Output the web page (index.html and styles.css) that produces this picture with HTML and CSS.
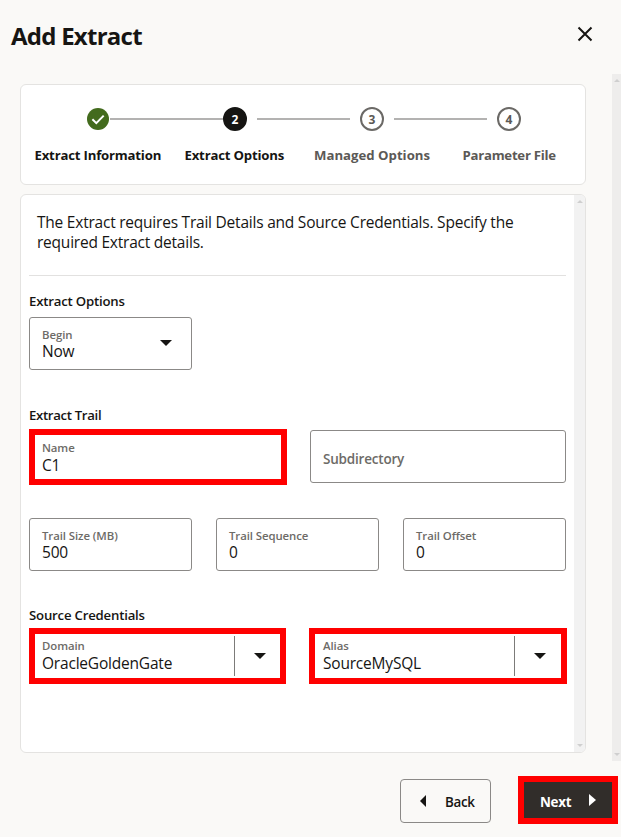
FILE: index.html
```html
<!DOCTYPE html>
<html lang="en">
<head>
<meta charset="utf-8">
<title>Add Extract</title>
<link rel="stylesheet" href="styles.css">
</head>
<body>
<header class="header">
  <h1 class="title">Add Extract</h1>
  <svg class="close" width="16" height="16" viewBox="0 0 16 16"><path d="M1.5 1.5 14.5 14.5M14.5 1.5 1.5 14.5"/></svg>
</header>
<main class="viewport">
  <div class="content">
    <section class="card stepper">
      <div class="track">
        <svg class="done" width="22" height="22" viewBox="0 0 22 22"><circle cx="11" cy="11" r="11"/><path d="M5.4 11.3 9.3 15.2 16.7 7.6"/></svg>
        <span class="line line-done"></span>
        <span class="dot current">2</span>
        <span class="line"></span>
        <span class="dot">3</span>
        <span class="line"></span>
        <span class="dot">4</span>
      </div>
      <div class="labels">
        <span class="step step-info">Extract Information</span>
        <span class="step step-options">Extract Options</span>
        <span class="step step-managed">Managed Options</span>
        <span class="step step-param">Parameter File</span>
      </div>
    </section>
    <section class="card panel">
      <div class="form">
        <p class="intro">The Extract requires Trail Details and Source Credentials. Specify the<br>required Extract details.</p>
        <h2 class="heading heading-options">Extract Options</h2>
        <div class="row row-begin">
          <div class="field select"><span class="label">Begin</span><span class="value">Now</span><span class="caret"></span></div>
        </div>
        <h2 class="heading heading-trail">Extract Trail</h2>
        <div class="row row-name">
          <div class="field marked name"><span class="label">Name</span><span class="value">C1</span></div>
          <div class="field empty"><span class="placeholder">Subdirectory</span></div>
        </div>
        <div class="row row-size">
          <div class="field"><span class="label">Trail Size (MB)</span><span class="value">500</span></div>
          <div class="field"><span class="label">Trail Sequence</span><span class="value">0</span></div>
          <div class="field"><span class="label">Trail Offset</span><span class="value">0</span></div>
        </div>
        <h2 class="heading heading-source">Source Credentials</h2>
        <div class="row row-source">
          <div class="field marked combo"><div class="text"><span class="label">Domain</span><span class="value">OracleGoldenGate</span></div><div class="drop"><span class="caret"></span></div></div>
          <div class="field marked combo alias"><div class="text"><span class="label">Alias</span><span class="value">SourceMySQL</span></div><div class="drop"><span class="caret"></span></div></div>
        </div>
      </div>
      <div class="scrollbar inner"><span class="arrow up"></span><span class="arrow down"></span></div>
    </section>
  </div>
  <div class="scrollbar outer"><span class="arrow up"></span><span class="arrow down"></span></div>
</main>
<footer class="footer">
  <button class="button back"><span class="prev"></span>Back</button>
  <button class="button next">Next<span class="fwd"></span></button>
</footer>
</body>
</html>
```
FILE: styles.css
```css
* { box-sizing: border-box; }
body {
  margin: 0;
  width: 621px;
  height: 837px;
  overflow: hidden;
  background: #faf9f7;
  color: #161513;
  font-family: "Open Sans", "Noto Sans", sans-serif;
  white-space: nowrap;
}
h1, h2, p { margin: 0; }
.header {
  display: flex;
  justify-content: space-between;
  height: 74px;
  padding: 19px 28px 0 11px;
}
.title { font-size: 24px; line-height: 33px; font-weight: 700; letter-spacing: -0.75px; }
.close { margin-top: 7px; fill: none; stroke: #161513; stroke-width: 2; }
.viewport { display: flex; justify-content: space-between; height: 687px; }
.content { width: 566px; margin-left: 20px; padding-top: 10px; }
.card { background: #fff; border: 1px solid #e4e3e1; border-radius: 6px; overflow: hidden; }
.stepper { height: 101px; margin-bottom: 9px; }
.track { display: flex; align-items: center; height: 24px; margin: 22px 0 0 66px; }
.done circle { fill: #436b1d; }
.done path { fill: none; stroke: #fff; stroke-width: 2; }
.dot {
  width: 24px;
  height: 24px;
  border: 2px solid #6b6966;
  border-radius: 50%;
  color: #5b5956;
  font-size: 12px;
  line-height: 21px;
  font-weight: 700;
  text-align: center;
}
.current { background: #161513; border-color: #161513; color: #fff; }
.line { width: 93px; height: 2px; margin: 0 10px; background: #b3b2b1; }
.line-done { width: 113px; margin: 0 0 0 1px; }
.labels { display: grid; grid-template-columns: 150px 129.5px 148.5px 1fr; padding-left: 13.5px; margin-top: 14px; }
.step { font-size: 13.2px; line-height: 20px; font-weight: 700; letter-spacing: -0.2px; }
.step-managed, .step-param { color: #5b5956; }
.step-managed { letter-spacing: 0; }
.step-param { letter-spacing: -0.26px; }
.panel { display: flex; justify-content: space-between; height: 559px; }
.form { width: 545px; padding: 16px 0 0 8px; }
.intro {
  height: 65px;
  padding: 1px 0 0 8px;
  border-bottom: 1px solid #e2e1e0;
  font-size: 15.5px;
  line-height: 20px;
  letter-spacing: -0.225px;
}
.heading { font-size: 13.2px; line-height: 20px; font-weight: 600; letter-spacing: -0.2px; }
.heading-options { margin-top: 15px; }
.row { display: flex; justify-content: space-between; }
.row-begin { margin-top: 6px; height: 52px; }
.heading-trail { margin-top: 36px; letter-spacing: -0.33px; }
.row-name { margin: 4px -1px 0 0; height: 56px; }
.row-size { margin-top: 33px; height: 53px; }
.heading-source { margin-top: 34px; }
.row-source { margin: 3px -1px 0 0; height: 56px; }
.field {
  position: relative;
  width: 163px;
  height: 53px;
  padding: 9px 0 0 12px;
  border: 1px solid #8b8987;
  border-radius: 3px;
}
.label, .value { display: block; }
.label { color: #6d6b67; font-size: 11.4px; line-height: 16px; height: 15px; font-weight: 600; letter-spacing: -0.08px; }
.value { padding-top: 1px; font-size: 15.5px; line-height: 16px; height: 17px; letter-spacing: -0.2px; }
.marked { height: 56px; border: 6px solid #f00; border-radius: 0; padding: 5px 0 0 7px; }
.marked .value { margin-top: 1px; }
.name { width: 258px; }
.empty { width: 256px; margin: 1px 1px 0 0; padding: 0 0 0 12px; }
.placeholder { color: #6d6b67; font-size: 13.5px; line-height: 56px; font-weight: 600; letter-spacing: -0.2px; }
.caret { border: 6px solid transparent; border-top-color: #161513; border-bottom: 0; width: 12px; height: 6px; }
.select .caret { position: absolute; right: 19px; top: 22px; }
.combo { display: flex; width: 257px; padding: 2px 0 2px 7px; }
.text { width: 192px; padding-top: 2px; }
.drop { flex: 1; display: flex; justify-content: center; border-left: 1px solid #7c7b79; padding: 17px 0 0 4px; }
.alias { width: 258px; padding-left: 8px; }
.alias .text { width: 191px; }
.scrollbar { display: flex; flex-direction: column; justify-content: space-between; align-items: center; background: #f2f2f2; }
.inner { width: 11px; padding: 5px 0; }
.outer { width: 9px; padding: 5px 0; background: #eeedec; }
.arrow { border: 3px solid transparent; width: 6px; }
.up { border-bottom-color: #cfcfcf; border-top: 0; }
.down { border-top-color: #cfcfcf; border-bottom: 0; }
.footer { display: flex; justify-content: flex-end; gap: 27px; padding: 15px 3px 0 0; }
.button { display: flex; align-items: center; font: 700 13.4px "Open Sans", sans-serif; letter-spacing: -0.3px; padding: 0; }
.back { width: 91px; height: 44px; margin-top: 3px; padding-top: 1px; border: 1px solid #8b8987; border-radius: 4px; background: transparent; color: #161513; font-weight: 600; letter-spacing: -0.3px; }
.next { width: 100px; height: 48px; padding: 3px 0 0 16px; border: 6px solid #f00; background: #312d2a; color: #fff; }
.prev, .fwd { border: 6px solid transparent; margin-top: -2px; }
.prev { border-right-color: #161513; border-left: 0; margin-right: 19px; margin-left: 19px; }
.fwd { border-left: 7px solid #fff; border-right: 0; margin-left: 18px; margin-top: -3px; }
```
